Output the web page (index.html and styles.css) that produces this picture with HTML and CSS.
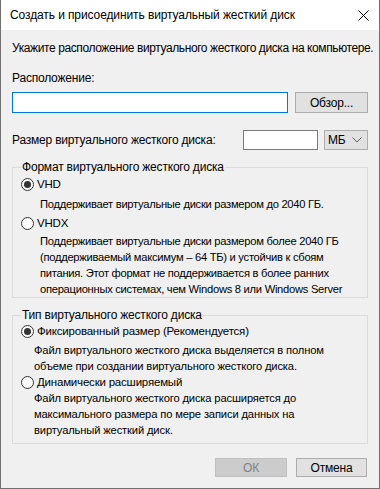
FILE: index.html
```html
<!DOCTYPE html>
<html lang="ru">
<head>
<meta charset="utf-8">
<title>Создать и присоединить виртуальный жесткий диск</title>
<link rel="stylesheet" href="styles.css">
</head>
<body>
<div class="window">
  <div class="titlebar">
    <span class="title">Создать и присоединить виртуальный жесткий диск</span>
    <svg class="close" width="11" height="11" viewBox="0 0 11 11"><path d="M0.5 0.5 L10.5 10.5 M10.5 0.5 L0.5 10.5" stroke="#000" stroke-width="1" fill="none"/></svg>
  </div>
  <div class="content">
    <p class="intro">Укажите расположение виртуального жесткого диска на компьютере.</p>
    <p class="label">Расположение:</p>
    <div class="loc-row">
      <div class="textbox focused"></div>
      <div class="btn browse">Обзор...</div>
    </div>
    <div class="size-row">
      <span class="size-label">Размер виртуального жесткого диска:</span>
      <div class="textbox size"></div>
      <div class="combo"><span>МБ</span><svg width="10" height="6" viewBox="0 0 10 6"><path d="M0.5 0.5 L5 5 L9.5 0.5" stroke="#606060" stroke-width="1" fill="none"/></svg></div>
    </div>
    <fieldset class="group format">
      <legend>Формат виртуального жесткого диска</legend>
      <div class="option first"><span class="radio checked"></span>VHD</div>
      <p class="desc d1">Поддерживает виртуальные диски размером до 2040 ГБ.</p>
      <div class="option second"><span class="radio"></span>VHDX</div>
      <p class="desc d2">Поддерживает виртуальные диски размером более 2040 ГБ<br>(поддерживаемый максимум – 64 ТБ) и устойчив к сбоям<br>питания. Этот формат не поддерживается в более ранних<br>операционных системах, чем Windows 8 или Windows Server</p>
    </fieldset>
    <fieldset class="group type">
      <legend>Тип виртуального жесткого диска</legend>
      <div class="option first"><span class="radio checked"></span>Фиксированный размер (Рекомендуется)</div>
      <p class="desc d3">Файл виртуального жесткого диска выделяется в полном<br>объеме при создании виртуального жесткого диска.</p>
      <div class="option second"><span class="radio"></span>Динамически расширяемый</div>
      <p class="desc d4">Файл виртуального жесткого диска расширяется до<br>максимального размера по мере записи данных на<br>виртуальный жесткий диск.</p>
    </fieldset>
    <div class="buttons">
      <div class="btn disabled">ОК</div>
      <div class="btn cancel">Отмена</div>
    </div>
  </div>
</div>
</body>
</html>
```

FILE: styles.css
```css
* {
  box-sizing: border-box;
  margin: 0;
  padding: 0;
}

html, body {
  width: 380px;
  height: 489px;
  overflow: hidden;
}

body {
  font-family: "Liberation Sans", Arial, sans-serif;
  font-size: 12px;
  line-height: 16px;
  color: #000;
  background: #f0f0f0;
}

.window {
  width: 380px;
  height: 489px;
  display: flex;
  flex-direction: column;
  border: 1px solid #707070;
  border-top: none;
}

.titlebar {
  height: 30px;
  flex: none;
  background: #fff;
  display: flex;
  align-items: center;
  padding-left: 9px;
  padding-right: 10px;
}

.title {
  font-size: 12px;
  letter-spacing: -0.1px;
  white-space: nowrap;
}

.close {
  margin-left: auto;
  display: block;
}

.content {
  flex: 1;
  background: #f0f0f0;
  padding: 10px 11px 0 11px;
  display: flex;
  flex-direction: column;
  letter-spacing: -0.2px;
}

.intro {
  white-space: nowrap;
  letter-spacing: -0.4px;
}

.label {
  margin-top: 14px;
}

.loc-row {
  margin-top: 6px;
  display: flex;
  gap: 7px;
}

.textbox {
  background: #fff;
  border: 1px solid #7a7a7a;
}

.textbox.focused {
  width: 276px;
  height: 21px;
  border-color: #0078d7;
}

.btn {
  background: #e1e1e1;
  border: 1px solid #adadad;
  display: flex;
  align-items: center;
  justify-content: center;
}

.browse {
  width: 73px;
  height: 21px;
}

.size-row {
  margin-top: 17px;
  height: 20px;
  display: flex;
  align-items: center;
}

.textbox.size {
  margin-left: auto;
  width: 75px;
  height: 20px;
}

.combo {
  margin-left: 6px;
  width: 44px;
  height: 20px;
  background: #e1e1e1;
  border: 1px solid #adadad;
  display: flex;
  align-items: center;
  justify-content: space-between;
  padding: 0 5px 0 3px;
}

.combo svg {
  display: block;
}

.group {
  border: 1px solid #dcdcdc;
  padding: 0 0 0 8px;
  min-width: 0;
}

.group legend {
  margin-left: 0;
  padding: 0 1px;
  line-height: 16px;
}

.format {
  margin-top: 9px;
}

.type {
  margin-top: 9px;
  padding-bottom: 5px;
}

.option {
  display: flex;
  align-items: center;
  height: 16px;
  white-space: nowrap;
  font-size: 11.5px;
}

.radio {
  width: 13px;
  height: 13px;
  border: 1px solid #333;
  border-radius: 50%;
  background: #fff;
  margin-right: 3px;
  flex: none;
  position: relative;
}

.radio.checked::after {
  content: "";
  position: absolute;
  left: 2px;
  top: 2px;
  width: 7px;
  height: 7px;
  border-radius: 50%;
  background: #333;
}

.format .first {
  margin-top: 1px;
}

.desc {
  white-space: nowrap;
  font-size: 11.2px;
  letter-spacing: -0.15px;
}

.format .desc {
  padding-left: 19px;
  letter-spacing: -0.28px;
}

.d1 {
  margin-top: 4px;
}

.format .second {
  margin-top: 3px;
}

.d2 {
  margin-top: 2px;
}

.type .first {
  margin-top: 0;
}

.type .desc {
  padding-left: 13px;
}

.d3 {
  margin-top: 3px;
}

.type .second {
  margin-top: 0;
}

.d4 {
  margin-top: 0;
}

.buttons {
  margin-top: 14px;
  display: flex;
  justify-content: flex-end;
  gap: 9px;
  padding-right: 1px;
}

.buttons .btn {
  width: 72px;
  height: 19px;
}

.btn.disabled {
  background: #cccccc;
  border-color: #bfbfbf;
  color: #838383;
}

.btn.cancel {
  width: 71px;
}
```
